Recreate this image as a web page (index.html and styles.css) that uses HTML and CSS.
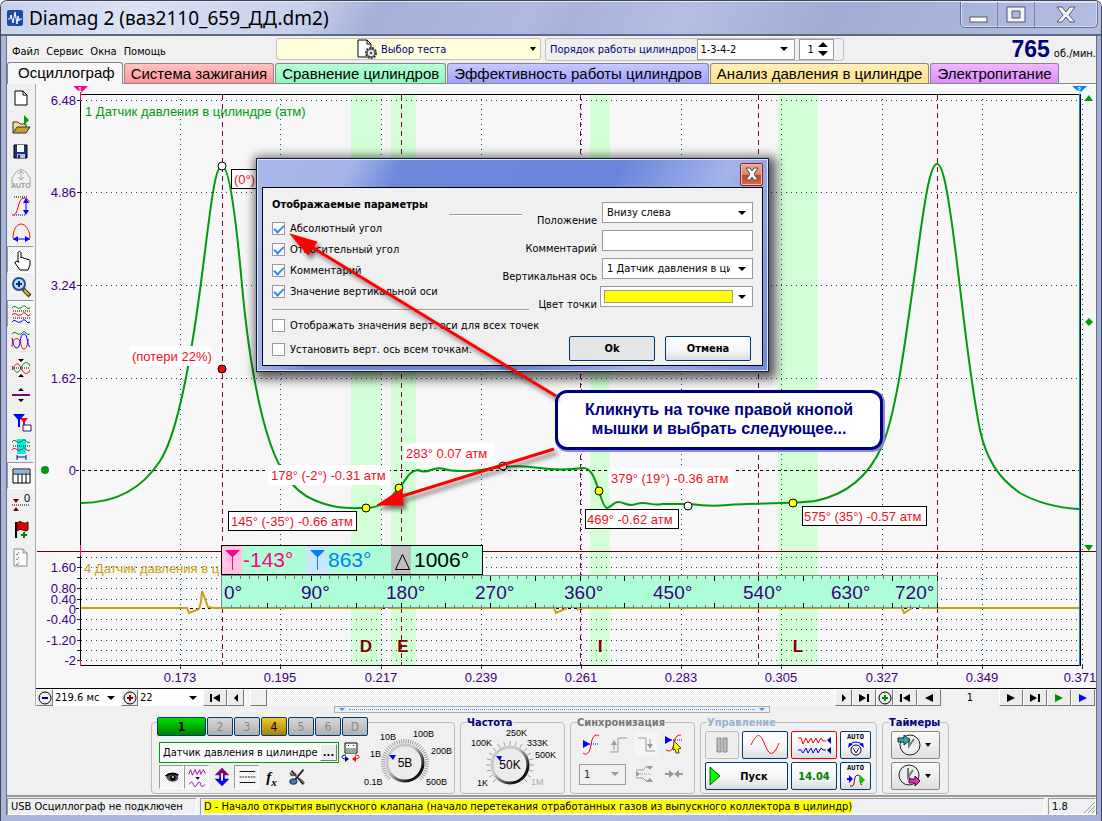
FILE: index.html
```html
<!DOCTYPE html>
<html lang="ru">
<head>
<meta charset="utf-8">
<title>Diamag 2</title>
<link rel="stylesheet" href="styles.css">
</head>
<body>
<div class="window">
  <header class="titlebar">
    <svg class="app-icon" viewBox="0 0 16 16"><rect width="16" height="16" rx="2" fill="#1c4aa8"/><path d="M1 9h2l1-4 2 8 2-11 2 12 1-8 1 5 1-2h2" fill="none" stroke="#fff"/></svg>
    <h1 class="title">Diamag 2 (ваз2110_659_ДД.dm2)</h1>
    <div class="win-buttons">
      <button class="win-btn" aria-label="Свернуть"><svg width="20" height="20"><rect x="1" y="12" width="17" height="5" fill="#fff" stroke="#556"/></svg></button>
      <button class="win-btn" aria-label="Развернуть"><svg width="20" height="20"><path fill-rule="evenodd" d="M1 2h18v15H1zM6 6v7h8V6z" fill="#f4f4fa" stroke="#556"/></svg></button>
      <button class="win-btn win-close" aria-label="Закрыть"><svg width="20" height="20"><path d="M1 2h5l4 5 4-5h5l-6 8 6 7h-5l-4-5-4 5H1l6-7z" fill="#f6f6fa" stroke="#556"/></svg></button>
    </div>
  </header>

  <main class="client">
    <div class="menurow">
      <nav class="menu"><button>Файл</button><button>Сервис</button><button>Окна</button><button>Помощь</button></nav>
      <button class="test-select">
        <svg width="21" height="21"><path d="M1 1h9l4 4v13H1z" fill="#fff" stroke="#000"/><path d="M10 1v4h4" fill="none" stroke="#000"/><circle cx="14" cy="14" r="5" fill="#ccc" stroke="#333" stroke-width="2" stroke-dasharray="2 1"/><circle cx="14" cy="14" r="4" fill="#ddd" stroke="#444"/><circle cx="14" cy="14" r="1" fill="#222"/></svg>
        <span>Выбор теста</span><i class="caret"></i>
      </button>
      <div class="order">
        <label for="order">Порядок работы цилиндров</label>
        <span class="combo combo-order"><select id="order"><option>1-3-4-2</option></select></span>
        <span class="spin"><input type="text" value="1" aria-label="Цилиндр"><svg width="12" height="16"><path d="M1 6l5-5 5 5zM1 10h10l-5 5z"/></svg></span>
      </div>
      <div class="rpm"><b>765</b><span>об./мин.</span></div>
    </div>

    <nav class="tabs">
      <button class="tab tab-active">Осциллограф</button>
      <button class="tab tab-red">Система зажигания</button>
      <button class="tab tab-green">Сравнение цилиндров</button>
      <button class="tab tab-violet">Эффективность работы цилиндров</button>
      <button class="tab tab-yellow">Анализ давления в цилиндре</button>
      <button class="tab tab-pink">Электропитание</button>
    </nav>

    <div class="work">
      <aside class="tools">
        <button aria-label="Новый"><svg viewBox="0 0 24 24"><path d="M6 5h8l4 4v10H6z" fill="#fff" stroke="#000"/><path d="M14 5v4h4" fill="none" stroke="#000"/></svg></button>
        <button aria-label="Открыть"><svg viewBox="0 0 24 24"><path d="M4 20V9h5l2 2h6v3" fill="#f4e08c" stroke="#333"/><path d="M4 20l4-6h13l-4 6z" fill="#c8a030" stroke="#333"/><path d="M15 2l5 5-5 5z" fill="#00a000"/></svg></button>
        <button aria-label="Сохранить"><svg viewBox="0 0 24 24"><path d="M5 5h13v13H5z" fill="#1c3878" stroke="#000"/><path d="M8 5h7v7H8z" fill="#fff"/><path d="M8 14h8v4H8z" fill="#b0c4e8"/><path d="M9 15h2v3H9z" fill="#123"/></svg></button>
        <button aria-label="Авто"><svg viewBox="0 0 24 24"><path d="M3 17V11l4-6 5-3 5 3 4 6v6M12 3v10M9 7l3-3 3 3M9 10l3 3 3-3" fill="none" stroke="#aaa"/><text x="2" y="21" class="ico-auto">AUTO</text></svg></button>
        <button aria-label="Амплитуда"><svg viewBox="0 0 24 24"><path d="M5 3h14M5 21h12" stroke="#000" stroke-dasharray="1 1"/><path d="M3 21c7 2 5-17 12-17 4 0 5 4 6 4" fill="none" stroke="#f00"/><path d="M17 5v15" stroke="#00f"/><path d="M14 9l3-5 3 5zM14 16l3 5 3-5z" fill="#00f"/></svg></button>
        <button aria-label="Период"><svg viewBox="0 0 24 24"><path d="M4 17C4 10 7 3 12 3s9 7 9 14" fill="none" stroke="#f00"/><path d="M4 18h17" stroke="#00f"/><path d="M9 15l-5 3 5 3zM16 15l5 3-5 3z" fill="#00f"/></svg></button>
        <button class="pressed" aria-label="Рука"><svg viewBox="0 0 24 24"><path d="M9 14V5c0-2 3-2 3 0v5c0-1 3-1 3 1 0-1 3-1 3 1 0-1 3-1 3 1v4l-2 5h-8l-5-7c0-2 2-2 4-1z" fill="#fff" stroke="#000"/></svg></button>
        <button aria-label="Масштаб"><svg viewBox="0 0 24 24"><path d="M14 14l7 7" stroke="#333" stroke-width="4"/><path d="M15 15l5 5" stroke="#e8b830" stroke-width="2"/><circle cx="10" cy="9" r="6" fill="#b8dcff" stroke="#24508c" stroke-width="2"/><path d="M10 6v6M7 9h6" stroke="#003080" stroke-width="2"/></svg></button>
        <button class="pressed" aria-label="Раздельно"><svg viewBox="0 0 24 24"><g fill="none"><path d="M3 6q2-3 4-1t5 1q3-4 5-1t4 1" stroke="#080"/><path d="M3 13q2-3 4-1t5 1q3-4 5-1t4 1" stroke="#f00"/><path d="M3 20q2-3 4-1t5 1q3-4 5-1t4 1" stroke="#00f"/><path d="M4 9h17M4 16h17" stroke="#000" stroke-dasharray="1 1"/></g></svg></button>
        <button aria-label="Совместно"><svg viewBox="0 0 24 24"><g fill="none"><path d="M3 5q2-3 4-1t5 1q3-4 5-1t4 1" stroke="#080"/><path d="M3 18c0-6 3-10 6-8 4 2 2 10 6 10s3-9 5-10" stroke="#f00"/><path d="M3 9c1 5 2 10 5 10 4 0 2-14 7-14 4 0 3 12 6 13" stroke="#00f"/></g></svg></button>
        <button aria-label="Центр"><svg viewBox="0 0 24 24"><g fill="none"><path d="M3 12h18" stroke="#000" stroke-dasharray="1 1"/><path d="M3 14c4-8 6-8 9-2s6 8 9 2" stroke="#f00"/><path d="M3 10c4 8 6 8 9 2s6-8 9-2" stroke="#080"/></g><path d="M9 3h6l-3 3zM9 21h6l-3-3z"/></svg></button>
        <button aria-label="Разделитель"><svg viewBox="0 0 24 24"><path d="M3 12h18" stroke="#800080" stroke-width="2"/><path d="M9 8h6l-3-3zM9 16h6l-3 3z"/></svg></button>
        <button aria-label="Маркеры"><svg viewBox="0 0 24 24"><path d="M4 4h12l-6 7z" fill="#00f"/><path d="M10 8v9" stroke="#00f" stroke-width="2"/><path d="M11 8h8l-4 5z" fill="#f00"/><path d="M15 9v7" stroke="#f00" stroke-width="2"/><path d="M14 15h8v6h-8z" fill="#fff" stroke="#226"/></svg></button>
        <button aria-label="Область"><svg viewBox="0 0 24 24"><path d="M8 2h9v15H8z" fill="#0ee"/><g fill="none"><path d="M3 5q2-3 4-1t5 1q3-4 5-1t4 1" stroke="#080"/><path d="M3 13q2-3 4-1t5 1q3-4 5-1t4 1" stroke="#f00"/><path d="M4 9h17" stroke="#000" stroke-dasharray="1 1"/><path d="M8 18v5M17 18v5M8 20h9" stroke="#00c"/></g></svg></button>
        <button class="pressed" aria-label="Таблица"><svg viewBox="0 0 24 24"><path d="M4 5h17v14H4z" fill="#fff" stroke="#000"/><path d="M5 6h15v3H5z" fill="#80b8e8"/><path d="M4 10h17M9 10v9M13 10v9M17 10v9" stroke="#000"/></svg></button>
        <button aria-label="Ноль"><svg viewBox="0 0 24 24"><path d="M3 14h18" stroke="#000" stroke-dasharray="1 1"/><path d="M4 8h6l-3 4zM4 20h6l-3-4z" fill="#800000"/><text x="15" y="11" class="ico-zero">0</text></svg></button>
        <button aria-label="Флаг"><svg viewBox="0 0 24 24"><path d="M7 4v16" stroke="#000" stroke-width="2"/><path d="M8 5q3-3 6 0 2 1 5-1v8q-3 2-5 0-3-2-6 1z" fill="#e00000" stroke="#400"/><path d="M15 14v6M12 17h6" stroke="#080" stroke-width="2"/></svg></button>
        <button aria-label="Отчёт"><svg viewBox="0 0 24 24"><path d="M5 4h9l4 4v13H5z" fill="#fafafa" stroke="#888"/><path d="M14 4v4h4M7 9l1 1 2-3M7 14l1 1 2-3M7 19l1 1 2-3" fill="none" stroke="#888"/></svg></button>
      </aside>

      <div class="view">
        <section class="chart">
          <svg class="plot" viewBox="36 84 1060 604">
            <g fill="#d4ffd6"><path d="M351 95h30v570h-30zM391 95h25v570h-25zM590 95h20v570h-20zM778 95h40v570h-40z"/></g>
            <g id="grid" class="grid"></g>
            <path class="zero" d="M76 470.500h1004M76 608.500h1004"/>
            <path class="cycle" d="M222.500 95v570M401.500 95v570M580.500 95v570M758.500 95v570M937.500 95v570"/>
            <path d="M80.500 94v571.500M80 94.500h1001M80 665.500h1001" fill="none" stroke="#000"/>
            <path d="M1080.500 94v572" stroke="#000"/>
            <path d="M1079.500 94v572" stroke="#0080ff"/>
            <path d="M37 551.500h1059" stroke="#700000"/>
            <path d="M80.500 92v9M80.500 545v11M80.500 660v6" stroke="#f08"/>
            <path d="M73 86h15l-7 7z" fill="#f08"/><path d="M1072 86h15l-7 7z" fill="#0080ff"/>
            <text class="flag" x="78" y="92">1</text><text class="flag" x="1077" y="92">2</text>
            <path d="M1084 101h9l-4-6zM1084 545h9l-4 6z" fill="#009a10"/><path d="M1085 322l4-4 4 4-4 4z" fill="#009a10"/><circle cx="45" cy="470" r="4" fill="#009a10"/>
            <text class="series1" x="85" y="116">1 Датчик давления в цилиндре (атм)</text>
            <text class="series4" x="84" y="573">4 Датчик давления в ц</text>
            <path class="curve4" d="M81 608H187L189 613L194 611L199 609L201 602L202 591L204 596L208 607L214 608H383M388 608H554L556 613L567 608M577 610L580 608H902L904 613L912 608M922 608H1079"/>
            <path id="curve" class="curve1" d="M81 503C112 503 140 492 160 461C177 435 190 365 200 290S214 166 222 166S237 230 242 285S256 395 266 430S290 490 314 500S350 508 366 508C385 508 392 495 399 488S408 471 418 470Q424 473 431 470T444 469T462 471T480 470T503 467T540 468T583 468C592 468 595 480 599 491Q604 508 607 508C611 508 613 502 618 502S626 505 631 505S636 503 643 503S655 506 662 504T690 504Q710 507 728 505C750 503 790 504 815 501C845 495 868 478 882 446S905 345 918 250C926 190 931 164 937 164S948 190 957 263S970 380 980 430C986 458 998 478 1020 493C1038 503 1060 508 1079 509"/>

            <g class="axis-y"><text x="76" y="105">6.48</text><text x="76" y="197">4.86</text><text x="76" y="290">3.24</text><text x="76" y="383">1.62</text><text x="76" y="475">0</text><text x="76" y="572">1.60</text><text x="76" y="593">0.80</text><text x="76" y="604">0.40</text><text x="76" y="614">0</text><text x="76" y="624">-0.40</text><text x="76" y="645">-1.20</text><text x="76" y="665">-2</text></g>
            <g class="axis-x"><text x="180" y="682">0.173</text><text x="280" y="682">0.195</text><text x="381" y="682">0.217</text><text x="481" y="682">0.239</text><text x="581" y="682">0.261</text><text x="681" y="682">0.283</text><text x="781" y="682">0.305</text><text x="882" y="682">0.327</text><text x="982" y="682">0.349</text><text x="1080" y="682">0.371</text></g>

            <g class="plain"><rect x="129" y="346" width="83" height="20"/><rect x="268" y="465" width="122" height="20"/><rect x="404" y="443" width="90" height="19"/><rect x="608" y="468" width="125" height="20"/></g>
            <g class="boxed"><rect x="231.500" y="169.500" width="40" height="19"/><rect x="228.500" y="511.500" width="128" height="19"/><rect x="585.500" y="509.500" width="93" height="19"/><rect x="802.500" y="506.500" width="124" height="19"/></g>
            <g class="note"><text x="132" y="361">(потери 22%)</text><text x="234" y="184">(0°)</text><text x="271" y="480">178° (-2°) -0.31 атм</text><text x="406" y="458">283° 0.07 атм</text><text x="231" y="526">145° (-35°) -0.66 атм</text><text x="611" y="483">379° (19°) -0.36 атм</text><text x="587" y="524">469° -0.62 атм</text><text x="804" y="521">575° (35°) -0.57 атм</text></g>
            <g stroke="#000"><circle cx="222" cy="166" r="4" fill="#fff"/><circle cx="222" cy="369" r="4" fill="red"/><circle cx="503" cy="466" r="4" fill="#fff"/><circle cx="688" cy="506" r="4" fill="#fff"/><g fill="#ff0"><circle cx="366" cy="508" r="4"/><circle cx="399" cy="488" r="4"/><circle cx="599" cy="491" r="4"/><circle cx="793" cy="503" r="4"/></g></g>
            <g class="phase"><text x="366" y="652">D</text><text x="403" y="652">E</text><text x="600" y="652">I</text><text x="798" y="652">L</text></g>

            <rect x="221.500" y="575.500" width="716" height="32" fill="#adfed6" stroke="#888"/>
            <g id="ticks"></g>
            <g class="degrees"><text x="224" y="599">0°</text><text x="301" y="599">90°</text><text x="386" y="599">180°</text><text x="475" y="599">270°</text><text x="564" y="599">360°</text><text x="653" y="599">450°</text><text x="743" y="599">540°</text><text x="831" y="599">630°</text><text x="895" y="599">720°</text></g>
            <rect x="221.500" y="545.500" width="261" height="29" fill="#adfed6" stroke="#000"/>
            <path d="M222 546h20v28h-20z" fill="#ffc4e2"/><path d="M306 546h21v28h-21z" fill="#cce6ff"/><path d="M391 546h20v28h-20z" fill="#c0c0c0"/>
            <path d="M225 550h15l-7 7v13h-1v-13z" fill="#f08"/><path d="M310 550h15l-7 7v13h-1v-13z" fill="#0080ff"/><path d="M395.500 569.500h14l-7-15z" fill="none" stroke="#000"/>
            <g class="readout"><text x="243" y="567" fill="#f08">-143°</text><text x="328" y="567" fill="#0080ff">863°</text><text x="414" y="567">1006°</text></g>
          </svg>

          <div class="dialog" role="dialog" aria-label="Отображаемые параметры">
            <div class="dialog-head"><button class="dialog-close" aria-label="Закрыть"><svg width="14" height="14"><path d="M1 1h4l2 3 2-3h4l-4 6 4 6H9L7 10l-2 3H1l4-6z" fill="#fff" stroke="#455"/></svg></button></div>
            <form class="dialog-body">
              <div class="checks">
                <div class="legend"><b>Отображаемые параметры</b><hr></div>
                <label><input type="checkbox" checked>Абсолютный угол</label>
                <label><input type="checkbox" checked>Относительный угол</label>
                <label><input type="checkbox" checked>Комментарий</label>
                <label><input type="checkbox" checked>Значение вертикальной оси</label>
                <hr>
                <label class="wide"><input type="checkbox">Отображать значения верт. оси для всех точек</label>
                <label class="wide"><input type="checkbox">Установить верт. ось всем точкам.</label>
              </div>
              <div class="fields">
                <label for="pos">Положение</label><span class="combo"><select id="pos"><option>Внизу слева</option></select></span>
                <label for="com">Комментарий</label><input id="com" type="text">
                <label for="ax">Вертикальная ось</label><span class="combo"><select id="ax"><option>1 Датчик давления в цилиндре</option></select></span>
                <label for="col">Цвет точки</label><span class="combo combo-color"><select id="col"><option></option></select></span>
                <div class="dialog-actions"><button type="button" class="btn btn-ok">Ok</button><button type="button" class="btn">Отмена</button></div>
              </div>
            </form>
          </div>
          <p class="callout">Кликнуть на точке правой кнопой мышки и выбрать следующее...</p>
          <svg class="arrows" viewBox="36 84 1060 604"><g stroke="red" stroke-width="3" fill="red"><path d="M556 396L310 246"/><path d="M554 449L396 498"/><path d="M290 234l27 8-9 13z" stroke-width="1"/><path d="M377 505l25-16 1 16z" stroke-width="1"/></g></svg>
        </section>

        <div class="scrollrow">
          <button class="sb w17" aria-label="Уменьшить"><svg viewBox="0 0 14 14"><circle cx="7" cy="7" r="6" fill="#eee" stroke="#000"/><path d="M4 7h6" stroke="#008" stroke-width="2"/></svg></button>
          <span class="combo flat time"><select aria-label="Время"><option>219.6 мс</option></select></span>
          <button class="sb w17" aria-label="Увеличить"><svg viewBox="0 0 14 14"><circle cx="7" cy="7" r="6" fill="#eee" stroke="#000"/><path d="M4 7h6M7 4v6" stroke="#800000" stroke-width="2"/></svg></button>
          <span class="combo flat div"><select aria-label="Деление"><option>22</option></select></span>
          <button class="sb w24" aria-label="В начало"><svg viewBox="0 0 14 14"><path d="M2 3h2v8H2zM12 3v8L5 7z"/></svg></button>
          <button class="sb w17" aria-label="Влево"><svg viewBox="0 0 14 14"><path d="M9 3v8L5 7z"/></svg></button>
          <div class="track"><span class="thumb"></span></div>
          <button class="sb w17" aria-label="Вправо"><svg viewBox="0 0 14 14"><path d="M5 3v8l4-4z"/></svg></button>
          <button class="sb w24" aria-label="В конец"><svg viewBox="0 0 14 14"><path d="M10 3h2v8h-2zM2 3v8l7-4z"/></svg></button>
          <button class="sb w17" aria-label="Добавить"><svg viewBox="0 0 14 14"><circle cx="7" cy="7" r="6" fill="#eee" stroke="#000"/><path d="M4 7h6M7 4v6" stroke="#080" stroke-width="2"/></svg></button>
          <button class="sb w24" aria-label="Первый"><svg viewBox="0 0 14 14"><path d="M2 3h2v8H2zM12 3v8L5 7z"/></svg></button>
          <button class="sb w24" aria-label="Назад"><svg viewBox="0 0 14 14"><path d="M11 3v8L3 7z"/></svg></button>
          <output class="frame">1</output>
          <button class="sb w24" aria-label="Вперёд"><svg viewBox="0 0 14 14"><path d="M3 3v8l8-4z"/></svg></button>
          <button class="sb w24" aria-label="Последний"><svg viewBox="0 0 14 14"><path d="M10 3h2v8h-2zM2 3v8l7-4z"/></svg></button>
          <button class="sb w24" aria-label="Воспроизвести"><svg viewBox="0 0 14 14"><path d="M3 3v8l8-4z" fill="#080"/></svg></button>
          <button class="sb w24" aria-label="Воспроизвести всё"><svg viewBox="0 0 14 14"><path d="M3 3v8l8-4z" fill="#00f"/></svg></button>
        </div>
      </div>
    </div>

    <div class="splitter"><i></i><span></span><i></i></div>

    <div class="panel">
      <fieldset class="group channel">
        <div class="chan-buttons"><button class="on1">1</button><button>2</button><button>3</button><button class="on4">4</button><button>5</button><button>6</button><button>D</button></div>
        <div class="chan-left">
          <div class="sensor"><span class="sensor-box"><input type="text" value="Датчик давления в цилиндре" aria-label="Датчик"><button>...</button></span>
            <svg width="20" height="20"><path d="M4 1h12v10H4z" fill="#fff" stroke="#000"/><path d="M5 6h10v5H5z" fill="#9a9"/><path d="M7 3l1 1M13 3l-1 1" stroke="#000"/><path d="M5 13c-6 0-5 4 0 4" fill="none" stroke="#008"/><path d="M4 14l4 3-4 3z" fill="#008"/><path d="M14 13c6 0 5 4 0 4" fill="none" stroke="#f00"/><path d="M15 14l-4 3 4 3z" fill="#f00"/></svg></div>
          <div class="chan-tools">
            <button class="pressed" aria-label="Видимость"><svg viewBox="0 0 24 24"><path d="M6 11q6-5 12-1l1 3q-1 4-6 4-5 0-7-4z" fill="#555"/><circle cx="13" cy="13" r="3"/><circle cx="13" cy="12" r="1" fill="#fff"/><path d="M5 11q6-5 14-1" fill="none" stroke="#000" stroke-width="2"/></svg></button>
            <button class="pressed" aria-label="Сглаживание"><svg viewBox="0 0 24 24"><path d="M3 9l2-5 2 6 3-6 2 5 3-5 1 5 3-5 2 4M4 20q2-5 4 0t4 0q3-5 4 0t5 0" fill="none" stroke="#a000a0"/><path d="M10 12h5l-2 3z"/></svg></button>
            <button aria-label="Смещение"><svg viewBox="0 0 24 24"><path d="M12 2l8 8h-5v2H9v-2H4z" fill="#800080"/><path d="M12 22l8-8h-5v-2H9v2H4z" fill="#00f"/><path d="M12 8v8" stroke="#fff" stroke-width="2"/></svg></button>
            <button class="pressed" aria-label="Линии"><svg viewBox="0 0 24 24"><path d="M4 6h17M4 18h17" stroke="#000"/><path d="M4 12h17" stroke="#000" stroke-dasharray="2 1"/></svg></button>
            <button class="fx">f<small>x</small></button>
            <button aria-label="Настройки"><svg viewBox="0 0 24 24"><path d="M6 5l5 6M19 4L9 16M13 13l6 7" stroke="#222" stroke-width="2"/><path d="M5 7c0 4 4 4 6 1M15 14l5 5" fill="none" stroke="#555" stroke-width="2"/><ellipse cx="8" cy="17" rx="4" ry="3" fill="#4878b0" stroke="#124"/></svg></button>
          </div>
        </div>
        <svg class="knob" viewBox="0 0 90 66" data-knob="1"><g class="knob-ticks"></g><circle cx="39" cy="38" r="18" fill="#ececec" stroke="url(#rim)" stroke-width="3"/><path d="M23 30h7l-3 5z" fill="#00f"/><text x="39" y="42" class="knob-val">5В</text><g class="knob-lab"><text x="14" y="15">10В</text><text x="47" y="12">100В</text><text x="4" y="32">1В</text><text x="65" y="29">200В</text><text x="-2" y="60">0.1В</text><text x="60" y="60">500В</text></g></svg>
      </fieldset>

      <fieldset class="group freq"><legend>Частота</legend>
        <svg class="knob" viewBox="0 0 100 66" data-knob="2"><defs><linearGradient id="rim" x1="0" y1="0" x2="1" y2="1"><stop offset=".4" stop-color="#c8c8c8"/><stop offset=".8" stop-color="#111"/></linearGradient></defs><g class="knob-ticks"></g><circle cx="49" cy="38" r="18" fill="#ececec" stroke="url(#rim)" stroke-width="3"/><path d="M35 29h6l-2 5z" fill="#00f"/><text x="49" y="42" class="knob-val">50K</text><g class="knob-lab"><text x="10" y="19">100K</text><text x="45" y="9">250K</text><text x="66" y="19">333K</text><text x="74" y="31">500K</text><text x="16" y="59">1K</text><text x="70" y="58" fill="#aaa">1M</text></g></svg>
      </fieldset>

      <fieldset class="group sync"><legend>Синхронизация</legend>
        <div class="sync-row"><svg viewBox="0 0 24 24"><path d="M4 21c3 3 7 0 8-8s4-12 8-9" fill="none" stroke="#f00"/><path d="M4 12h16" stroke="#00f" stroke-dasharray="1 1"/><path d="M4 8l7 4-7 4z" fill="#00f"/></svg><svg viewBox="0 0 24 24"><path d="M3 20h8V6h9M7 18v-7" fill="none" stroke="#999"/><path d="M4 13l3-5 3 5z" fill="#999"/></svg><svg class="dither" viewBox="0 0 24 24"><path d="M4 6h8v13h9M16 7v7" fill="none" stroke="#999"/><path d="M13 12h6l-3 5z" fill="#999"/></svg><svg viewBox="0 0 24 24"><path d="M4 18c6 3 7-2 8-7s2-8 7-8" fill="none" stroke="#f00"/><path d="M3 8h18" stroke="#00f" stroke-dasharray="1 1"/><path d="M3 4l7 4-7 4z" fill="#00f"/><path d="M12 9l7 7-3 1 1 4-3 0-1-4-2 1z" fill="#ff0" stroke="#440"/></svg></div>
        <div class="sync-row"><span class="combo combo-sync"><select aria-label="Канал" disabled><option>1</option></select></span><svg viewBox="0 0 24 24"><path d="M4 8h7l3-3h6M4 16h7l3 3h6" fill="none" stroke="#999"/><path d="M4 12h15" stroke="#999" stroke-dasharray="1 1"/><path d="M14 4h7l-3 4zM14 20h7l-3-4zM4 9l4 3-4 3z" fill="#999"/></svg><svg viewBox="0 0 24 24"><path d="M3 11h4V8l5 4-5 4v-3H3zM21 11h-4V8l-5 4 5 4v-3h4z" fill="#999"/></svg></div>
      </fieldset>

      <fieldset class="group control"><legend>Управление</legend>
        <div class="ctl">
          <div class="ctl-main">
            <button class="btn dis" aria-label="Пауза"><svg width="14" height="18"><path d="M2 2h4v14H2zM8 2h4v14H8z" fill="#bbb" stroke="#888"/></svg></button>
            <button class="btn" aria-label="Сигнал"><svg width="34" height="22"><path d="M3 11C10-4 13 1 17 11s8 13 14-2" fill="none" stroke="#f00"/></svg></button>
            <button class="btn start"><svg width="12" height="20"><path d="M1 1l10 9-10 9z" fill="#0f0" stroke="#060"/></svg><span>Пуск</span></button>
          </div>
          <div class="ctl-mid">
            <button class="btn redb" aria-label="Запись"><svg width="36" height="20"><path d="M2 3h3l2 6 3-6 2 5 3-5 2 5 3-5 2 5 3-5 2 3h3" fill="none" stroke="#f00"/><path d="M2 15h3l2 3 3-5 2 5 3-5 2 5 3-5 2 5 3-5 2 2h3" fill="none" stroke="#00f"/><path d="M35 2v7l-4-4zM35 12v7l-4-4z" fill="#008"/></svg></button>
            <button class="btn volt">14.04</button>
          </div>
          <div class="ctl-auto">
            <button class="btn"><span>AUTO</span><svg width="20" height="16"><circle cx="10" cy="9" r="5" fill="#fff" stroke="#000"/><path d="M7 7l3 5 3-5" fill="none" stroke="#00f"/><path d="M2 7l1-5 4 1zM18 7l-1-5-4 1z" fill="#00f"/><path d="M4 3q6-4 12 0" fill="none" stroke="#00f"/></svg></button>
            <button class="btn"><span>AUTO</span><svg width="20" height="16"><path d="M1 7h4" stroke="#00f" stroke-width="2"/><path d="M3 3l4 4-4 4z" fill="#00f"/><path d="M4 14c7 2 2-11 8-11 4 0 0 8 4 10" fill="none" stroke="#800"/><path d="M14 3l5 5-5 5z" fill="#0c0"/></svg></button>
          </div>
        </div>
      </fieldset>

      <fieldset class="group timers"><legend>Таймеры</legend>
        <button class="btn3d" aria-label="Таймер старта"><svg width="24" height="24"><circle cx="13" cy="12" r="10" fill="#eee" stroke="#222"/><path d="M12 5v8l5-7" fill="none" stroke="#777" stroke-width="2"/><path d="M1 5h6V2l6 5-6 5V9H1z" fill="#3aa" stroke="#033"/></svg><i class="caret"></i></button>
        <button class="btn3d" aria-label="Таймер останова"><svg width="24" height="24"><circle cx="12" cy="11" r="10" fill="#eee" stroke="#222"/><path d="M11 4v9l5-7M11 12l4 5" fill="none" stroke="#777" stroke-width="2"/><path d="M12 15h6v-3l5 5-5 5v-3h-6z" fill="#e3a" stroke="#404"/></svg><i class="caret"></i></button>
      </fieldset>
    </div>

    <footer class="status">
      <span class="pane pane-left">USB Осциллограф не подключен</span>
      <span class="pane pane-mid"><mark>D - Начало открытия выпускного клапана (начало перетекания отработанных газов из выпускного коллектора в цилиндр)</mark></span>
      <span class="pane pane-right">1.8<svg width="12" height="12"><path d="M1 12L12 1M5 12l7-7M9 12l3-3" stroke="#999"/></svg></span>
    </footer>
  </main>
</div>
<script src="script.js"></script>
</body>
</html>
```
FILE: styles.css
```css
* { box-sizing: border-box; }
body { margin: 0; font: 11px "DejaVu Sans Condensed", "Liberation Sans", sans-serif; color: #000; }
button, input, select { font: inherit; color: inherit; margin: 0; }
button { cursor: default; }
svg { display: block; flex: none; }

.window { min-height: 100vh; display: flex; flex-direction: column; padding: 0 4px 6px 5px; background: linear-gradient(90deg, #a9b6dc, #b0bce0 50%, #a4b0d8); border: 1px solid #445; border-radius: 7px 7px 0 0; border-bottom: 0; }
.titlebar { display: flex; align-items: center; height: 35px; margin: 0 -4px 0 -5px; padding: 0 3px 0 6px; background: linear-gradient(115deg, #c6d0ea 0, #dbe3f3 12%, #c4cfe8 28%, #a4b1d8 34%, #adb9de 48%, #a7b3d9 52%, #b2bfe2 62%, #9fadd4 75%, #b2bee2 100%); border-bottom: 2px solid #5c6884; border-top: 1px solid #dfe6f5; border-radius: 6px 6px 0 0; }
.app-icon { width: 16px; height: 16px; }
.title { flex: 1; margin: 0 0 0 6px; font: 19px "Noto Sans", sans-serif; }
.win-buttons { display: flex; align-self: flex-start; border: 1px solid #66708e; border-top: 0; border-radius: 0 0 5px 5px; box-shadow: inset 0 0 0 1px #d3dbef; }
.win-btn { display: flex; justify-content: center; align-items: center; width: 37px; height: 25px; padding: 0; background: none; border: 0; border-right: 1px solid #7c86a4; }
.win-close { width: 62px; border-right: 0; }

.client { flex: 1; display: flex; flex-direction: column; background: #f0f0f0; border-left: 1px solid #66708a; border-right: 1px solid #66708a; }
.menurow { display: flex; height: 26px; align-items: center; }
.menu { display: flex; gap: 7px; padding-left: 5px; flex: 0 0 269px; }
.menu button { border: 0; background: none; padding: 5px 0 0; }
.test-select { display: flex; align-items: center; gap: 3px; width: 265px; height: 22px; padding: 0 4px 0 80px; background: #ffffdc; border: 1px solid #c0c0c0; border-radius: 3px; color: #000080; }
.test-select span { flex: 1; text-align: left; }
.caret { border: 3px solid transparent; border-top: 4px solid #000; border-bottom: 0; }
.order { display: flex; align-items: center; gap: 4px; height: 23px; margin-left: 4px; padding: 0 9px 0 4px; border: 1px solid #c0c0c0; border-radius: 3px; color: #000080; white-space: nowrap; }
.order label { margin-right: -3px; }
.combo { position: relative; display: block; height: 21px; background: #fff; border: 1px solid #999; color: #000; }
.combo select { appearance: none; width: 100%; height: 100%; padding: 0 22px 0 4px; border: 0; background: none; opacity: 1; }
.combo::after { content: ""; position: absolute; right: 6px; top: 50%; margin-top: -2px; border: 4px solid transparent; border-top-color: #000; border-bottom: 0; pointer-events: none; }
.combo-order { width: 98px; }
.combo-order select { padding-left: 2px; }
.spin { display: flex; align-items: center; width: 35px; height: 21px; background: #fff; border: 1px solid #999; }
.spin input { flex: 1; min-width: 0; border: 0; padding: 0 0 0 7px; background: none; color: #000; }
.spin svg { margin-right: 4px; }
.rpm { margin-left: auto; display: flex; align-items: baseline; gap: 4px; }
.rpm b { font: bold 23px "Liberation Sans", sans-serif; color: #000080; }

.tabs { display: flex; align-items: flex-end; gap: 1px; height: 22px; border-bottom: 1px solid #888; }
.tab { height: 20px; padding: 0 6px; border: 1px solid #888; border-bottom: 0; border-radius: 3px 3px 0 0; font: 15px "Liberation Sans", sans-serif; line-height: 19px; white-space: nowrap; }
.tab-active { height: 22px; padding: 0 7px 2px 10px; background: #f7f7f7; margin-bottom: -1px; }
.tab-red { background: linear-gradient(#ffc4c4, #ff9494); }
.tab-green { background: linear-gradient(#b8ffd8, #8cf8ba); }
.tab-violet { background: linear-gradient(#c8c8ff, #a0a0ff); }
.tab-yellow { background: linear-gradient(#fff0b8, #ffe088); }
.tab-pink { background: linear-gradient(#f0b8ff, #dc8cff); }

.work { display: flex; background: #f0f0f0; }
.tools { flex: 0 0 29px; display: flex; flex-direction: column; border-right: 1px solid #aaa; }
.tools button, .chan-tools button { display: flex; justify-content: center; align-items: center; width: 27px; height: 27px; padding: 0; border: 1px solid transparent; background: none; }
.tools svg { width: 24px; height: 24px; }
.tools .pressed, .chan-tools .pressed { border-color: #999 #fff #fff #999; background: repeating-conic-gradient(#fff 0 25%, #ececec 0 50%) 0 0 / 2px 2px; }
.ico-auto { font: bold 7px "Liberation Sans", sans-serif; fill: #999; }
.ico-zero { font: 11px "Liberation Sans", sans-serif; }

.view { flex: 1; min-width: 0; background: #f7f7f7; }
.chart { position: relative; }
.plot { width: 100%; font: 13px "Liberation Sans", sans-serif; }
.grid path { fill: none; stroke: #104a70; stroke-dasharray: 1 4; }
.grid .mark { stroke: #222; stroke-dasharray: none; }
.zero { stroke: #000; stroke-dasharray: 3 3; }
.cycle { stroke: #800040; stroke-dasharray: 5 4; }
.curve1 { fill: none; stroke: #009a10; stroke-width: 2; }
.curve4 { fill: none; stroke: #c8a010; stroke-width: 2; }
.flag { font-size: 7px; font-weight: bold; fill: #fff; }
.series1 { fill: #009a10; }
.series4 { fill: #c8a010; }
.axis-y { fill: #400080; text-anchor: end; }
.axis-x { fill: #400080; text-anchor: middle; }
.plain rect { fill: #fff; }
.boxed rect { fill: #fff; stroke: #000; }
.note { fill: #f01020; }
.phase { fill: #800000; font-size: 17px; font-weight: bold; text-anchor: middle; }
.degrees { fill: #400080; font-size: 19px; }
.readout { font-size: 21px; }
.arrows { position: absolute; left: 0; top: 0; width: 100%; height: 100%; pointer-events: none; filter: drop-shadow(3px 4px 2px rgba(0, 0, 0, .5)); }

.dialog { position: absolute; left: 220px; top: 74px; width: 513px; padding: 0 5px 5px; background: linear-gradient(115deg, #a8b8ea, #a4b4ea 16%, #6f88dc 24%, #6a84da 60%, #a4b4ea 78%, #6f88dc 100%); border: 1px solid #101c3c; box-shadow: inset 0 0 0 1px #dfe6fa, 3px 3px 10px 4px rgba(0, 0, 0, .65); }
.dialog-head { display: flex; justify-content: flex-end; align-items: center; height: 28px; padding-top: 2px; }
.dialog-close { display: flex; justify-content: center; align-items: center; width: 23px; height: 23px; padding: 0; border: 1px solid #7a2a20; border-radius: 2px; background: linear-gradient(#eeaa98, #e08068 50%, #c03c20 50%, #d87050); box-shadow: inset 0 0 0 1px #f4b8a8; }
.dialog-body { display: flex; justify-content: space-between; height: 179px; border: 1px solid #000; background: #f0f0f0; padding: 10px 9px 4px 9px; margin: 0; }
.checks { display: flex; flex-direction: column; flex: 0 0 228px; min-width: 0; }
.checks > hr { margin: 7px 0 2px; border: 0; border-top: 1px solid #999; border-bottom: 1px solid #fff; width: 257px; }
.legend { display: flex; justify-content: space-between; width: 250px; height: 29px; align-items: flex-start; }
.legend hr { width: 73px; margin: 16px 0 0; border: 0; border-top: 1px solid #999; border-bottom: 1px solid #fff; }
.checks label { display: flex; align-items: center; gap: 5px; height: 21px; flex: none; white-space: nowrap; }
.checks .wide { height: 24px; }
.checks input { appearance: none; flex: none; width: 13px; height: 13px; border: 1px solid #999; background: #fff; }
.checks input:checked::after { content: ""; display: block; width: 8px; height: 4px; margin: 2px 1px; border: 2px solid #38f; border-top: 0; border-right: 0; transform: rotate(-45deg); }
.fields { display: grid; grid-template-columns: 95px 151px; grid-auto-rows: 21px; gap: 7px 5px; padding-top: 4px; }
.fields label { align-self: end; margin-bottom: -4px; white-space: nowrap; justify-self: end; }
.fields > input { border: 1px solid #999; width: 100%; }
.combo-color { margin-left: -2px; }
.combo-color select { margin: 3px; width: 129px; height: 13px; background: #ff0; border: 1px solid #999; border-radius: 0; display: block; }
.dialog-actions { grid-column: 1 / -1; display: flex; justify-content: flex-end; gap: 10px; padding: 22px 2px 0 0; height: 47px; }
.btn { display: flex; justify-content: center; align-items: center; padding: 0; border: 1px solid #003c74; border-radius: 2px; background: linear-gradient(#fff, #f4f4f4 60%, #dcdcdc); font-weight: bold; }
.dialog-actions .btn { width: 86px; height: 25px; }
.btn-ok { background: #e6e6e6; }
.callout { position: absolute; left: 519px; top: 306px; width: 328px; margin: 0; padding: 7px 20px 9px; background: #fff; border: 3px solid #000080; border-radius: 12px; color: #000080; font: bold 16px/19px "Liberation Sans", sans-serif; text-align: center; box-shadow: 1px 1px 0 1px #8890d0; }

.scrollrow { display: flex; height: 18px; border-top: 1px solid #000; padding-right: 1px; background: #f0f0f0; }
.sb { display: flex; flex: none; justify-content: center; align-items: center; padding: 0; border: 1px solid; border-color: #fff #777 #777 #fff; background: #ececec; }
.sb svg { width: 14px; height: 14px; }
.w17 { width: 17px; }
.w24 { width: 24px; }
.flat { border: 0; height: 17px; flex: none; }
.flat select { padding-left: 2px; }
.time { width: 68px; }
.div { width: 65px; }
.track { flex: 1; padding-left: 6px; background: repeating-conic-gradient(#fff 0 25%, #ececec 0 50%) 0 0 / 2px 2px; }
.thumb { display: block; width: 17px; height: 17px; border: 1px solid; border-color: #fff #777 #777 #fff; background: #f0f0f0; }
.frame { width: 58px; text-align: center; line-height: 17px; }

.splitter { display: flex; align-items: center; justify-content: space-between; gap: 4px; width: 40%; height: 7px; margin-left: 327px; padding: 0 4px; border: 1px solid #aaa; }
.splitter i { border: 3px solid transparent; border-top: 3px solid #39f; border-bottom: 0; }
.splitter span { flex: 1; border-top: 1px dotted #39f; }

.panel { display: flex; gap: 5px; flex: 1; padding: 3px 0 1px 144px; }
.group { position: relative; margin: 0; padding: 0; min-width: 0; border: 1px solid #bbb; border-radius: 4px; height: 78px; }
.group legend { margin-left: 6px; padding: 0; font-weight: bold; color: #000080; line-height: 13px; }
.sync legend { color: #777; }
.control legend { color: #9ab2d0; }
.channel { width: 304px; height: 72px; margin-top: 6px; display: grid; grid-template-columns: 214px 90px; }
.chan-buttons { position: absolute; left: 5px; top: -6px; display: flex; gap: 1px; background: #f0f0f0; }
.chan-buttons button { width: 26px; height: 19px; padding: 0; border: 1px solid #003c74; border-radius: 2px; background: linear-gradient(#d8d8d8, #b0b0b0); color: #888; font-size: 12px; }
.chan-buttons .on1 { width: 49px; background: linear-gradient(#00e000, #008000); color: #000; font-weight: bold; }
.chan-buttons .on4 { background: linear-gradient(#f0c828, #a88008); color: #000; }
.chan-left { padding: 19px 0 0 7px; }
.sensor { display: flex; gap: 2px; }
.sensor-box { display: flex; width: 180px; height: 21px; border: 1px solid #009a10; background: #fff; padding: 1px; }
.sensor-box input { flex: 1; min-width: 0; border: 0; padding: 0 0 0 2px; background: none; }
.sensor-box button { width: 17px; padding: 0; border: 1px solid; border-color: #fff #777 #777 #fff; background: #ececec; font-weight: bold; line-height: 8px; }
.chan-tools { display: flex; padding-top: 2px; }
.chan-tools button { width: 25px; height: 24px; }
.chan-tools svg { width: 22px; height: 22px; }
.chan-tools .fx { font: italic bold 15px "Liberation Serif", serif; }
.fx small { font-size: 11px; align-self: flex-end; }
.knob { width: 90px; height: 66px; align-self: center; font: 10px "Liberation Sans", sans-serif; overflow: visible; }
.freq .knob { width: 100px; margin-top: -2px; }
.knob-ticks path { stroke: #999; }
.knob-lab { font-size: 9px; }
.knob-val { font-size: 12px; text-anchor: middle; }
.freq { width: 105px; }
.sync { width: 125px; }
.sync-row { display: flex; align-items: center; justify-content: space-between; height: 30px; padding: 0 8px; }
.sync-row svg { width: 24px; height: 24px; }
.dither { background: repeating-conic-gradient(#fff 0 25%, #ececec 0 50%) 0 0 / 2px 2px; }
.combo-sync { width: 47px; background: #f0f0f0; color: #222; }
.combo-sync::after { border-top-color: #999; }
.control { width: 177px; }
.ctl { display: flex; gap: 3px; padding: 2px 4px 0; }
.ctl-main { display: grid; grid-template-columns: 34px 46px; gap: 3px; }
.ctl .btn { height: 28px; }
.ctl .dis { background: #eee; border-color: #bbb; }
.start { grid-column: 1 / -1; }
.start svg { margin: 0 19px 0 -16px; }
.ctl-mid, .ctl-auto { display: grid; gap: 3px; }
.ctl-mid .btn { width: 46px; }
.ctl .redb { border-color: #e00; }
.volt { color: #008000; }
.ctl-auto .btn { flex-direction: column; width: 31px; font: bold 7px "DejaVu Sans Mono", monospace; }
.timers { width: 67px; }
.timers .btn3d { margin: 2px 8px 3px; }
.btn3d { display: flex; align-items: center; gap: 4px; width: 49px; height: 28px; padding: 0 5px; border: 1px solid #888; border-radius: 2px; background: linear-gradient(#fafafa, #e0e0e0); }
.timers .btn3d + .btn3d { margin-top: 0; }

.status { display: flex; gap: 3px; border-top: 2px solid #999; padding-top: 1px; height: 20px; }
.pane { display: flex; align-items: center; border: 1px solid; border-color: #999 #fff #fff #999; padding-left: 3px; white-space: nowrap; overflow: hidden; }
.pane-left { flex: 0 0 190px; }
.pane-mid { flex: 1; min-width: 0; }
.pane-right { flex: 0 0 48px; justify-content: space-between; }
mark { background: #ff0; }
```
FILE: script.js
```javascript
const NS = "http://www.w3.org/2000/svg";
function path(parent, d, attrs) {
  const p = document.createElementNS(NS, "path");
  p.setAttribute("d", d);
  for (const k in attrs) p.setAttribute(k, attrs[k]);
  parent.appendChild(p);
}

// Grid lines of both plots and the marks on their axes
const grid = document.getElementById("grid");
for (const x of [180, 280, 381, 481, 581, 681, 781, 882, 982, 1082]) {
  path(grid, `M${x + 0.5} 99V665`, {});
  path(grid, `M${x + 0.5} 665v4`, { class: "mark" });
}
for (const y of [100, 192, 285, 378, 557, 567, 578, 588, 599, 619, 629, 640, 650, 660]) {
  path(grid, `M81 ${y + 0.5}H1080`, {});
  path(grid, `M77 ${y + 0.5}h4`, { class: "mark" });
}

// Crank angle ruler: a tick each 9 degrees, a long one each 45
const ticks = document.getElementById("ticks");
for (let i = 1; i <= 80; i++) {
  const x = Math.round(222 + i * 715 / 80) + 0.5;
  const major = i % 5 === 0;
  const len = major ? 5 : 3;
  path(ticks, `M${x} 576v${len}M${x} 608v${-len}`, { stroke: major ? "#000" : "#777" });
}

// Knob scales
document.querySelectorAll(".knob").forEach((svg) => {
  const cx = svg.dataset.knob === "1" ? 39 : 49;
  const step = svg.dataset.knob === "1" ? 6 : 15;
  const g = svg.querySelector(".knob-ticks");
  for (let a = -135; a <= 135; a += step) {
    const r = a * Math.PI / 180;
    const s = Math.sin(r), c = -Math.cos(r);
    path(g, `M${cx + 20 * s} ${38 + 20 * c}L${cx + 24 * s} ${38 + 24 * c}`, {});
  }
});
```
